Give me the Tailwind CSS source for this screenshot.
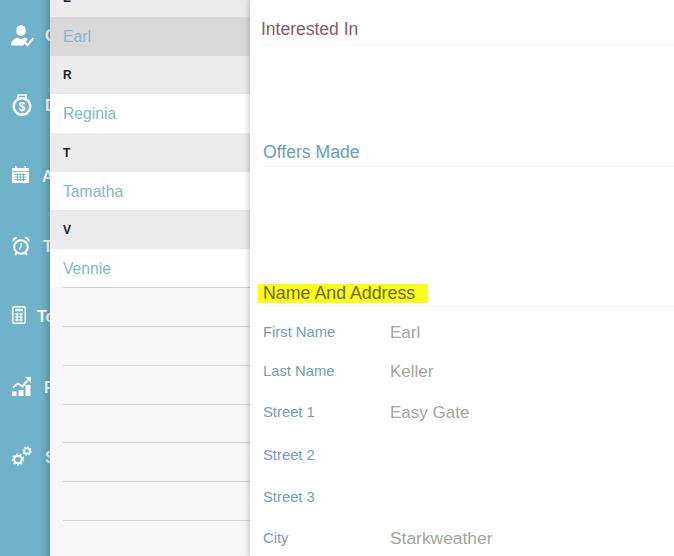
<!DOCTYPE html>
<html lang="en">
<head>
    <meta charset="UTF-8">
    <meta name="viewport" content="width=device-width, initial-scale=1.0">
    <title>Contacts</title>
    <script src="https://cdn.jsdelivr.net/npm/@tailwindcss/browser@4"></script>
</head>
<body class="bg-white font-['Liberation_Sans',Arial,sans-serif]">
    <div class="flex h-[556px] w-[674px] overflow-hidden">
        <!-- side menu, labels run under the list -->
        <nav class="w-[50px] shrink-0 overflow-hidden bg-[#6fb2c9] pt-[1px] text-white">
            <div class="flex h-[70.3px] items-center pl-[11px] font-bold text-[16px] whitespace-nowrap">
                <svg class="w-[24px] h-[22px] shrink-0" viewBox="0 0 24 22" fill="white"><ellipse cx="10" cy="5.500" rx="4.800" ry="5.500"/><path d="M0 20.500c0-4.500 2.500-6.500 6.500-8l3.500 2 3.500-2c1.500.5 2.500 1 3 2l-4.500 6z"/><path d="M13 18l1.500-1.500 2 2.200 5-6.200 1.500 1.200-6.500 8z"/></svg>
                <span class="ml-[10px]">Customers</span>
            </div>
            <div class="flex h-[70.3px] items-center pl-[12px] font-bold text-[16px] whitespace-nowrap">
                <svg class="w-[20px] h-[22px] shrink-0 mb-[3px]" viewBox="0 0 20 22" fill="none" stroke="white"><path d="M6 1h8v3h-8z" stroke-width="1.500"/><circle cx="10" cy="12.500" r="8.300" stroke-width="2.500"/><text x="10" y="17" text-anchor="middle" font-size="12" font-family="Liberation Sans" fill="white" stroke="none">$</text></svg>
                <span class="ml-[13px]">Deals</span>
            </div>
            <div class="flex h-[70.3px] items-center pl-[12px] font-bold text-[16px] whitespace-nowrap">
                <svg class="w-[17px] h-[17px] shrink-0 mb-[5px]" viewBox="0 0 17 17" fill="white"><path d="M0 2h3V0h1.500v2h8V0H14v2h3v15H0z"/><path d="M0 5.500h17" stroke="#6fb2c9" fill="none" stroke-width=".8"/><path d="M2.500 8.500h12M2.500 11h12M2.500 13.500h12M5.500 7.500v7.500M8.500 7.500v7.500M11.500 7.500v7.500" stroke="#6fb2c9" fill="none" stroke-width=".9"/></svg>
                <span class="ml-[13px]">Appointments</span>
            </div>
            <div class="flex h-[70.3px] items-center pl-[12px] font-bold text-[16px] whitespace-nowrap">
                <svg class="w-[18px] h-[20px] shrink-0 mb-[3px]" viewBox="0 0 18 20" fill="none" stroke="white"><circle cx="9" cy="11" r="6.800" stroke-width="2"/><path d="M9 7v4l-2 2.500" stroke-width="1.200"/><path d="M1 5.500C.5 2.500 2.500 1 5 1.500zM17 5.500c.5-3-1.500-4.500-4-4z" fill="white" stroke-width="1"/><path d="M4.500 17l-1.500 2M13.500 17l1.500 2" stroke-width="2"/></svg>
                <span class="ml-[13px]">Tasks</span>
            </div>
            <div class="flex h-[70.3px] items-center pl-[12px] font-bold text-[16px] whitespace-nowrap">
                <svg class="w-[14px] h-[18px] shrink-0 mb-[4px]" viewBox="0 0 14 18" fill="none" stroke="white"><rect x=".75" y=".75" width="12.500" height="16.500" rx="1.500" stroke-width="1.500"/><path d="M3 4h8" stroke-width="2.500"/><path d="M3 8h8M3 11h8M3 14h8M5 7v8.500M9 7v8.500" stroke-width="1.200"/></svg>
                <span class="ml-[11px]">Tools</span>
            </div>
            <div class="flex h-[70.3px] items-center pl-[12px] font-bold text-[16px] whitespace-nowrap">
                <svg class="w-[19px] h-[20px] shrink-0 mb-[4px]" viewBox="0 0 19 20" fill="white"><path d="M0 15.500h4.500V20H0zM6.500 14h5v6h-5zM13.500 9h5v11h-5z"/><path d="M1 11.500l5-4 4.500 3 5-6" fill="none" stroke="white" stroke-width="2"/><path d="M13 1h6v6z"/></svg>
                <span class="ml-[13px]">Reports</span>
            </div>
            <div class="flex h-[70.3px] items-center pl-[12px] font-bold text-[16px] whitespace-nowrap">
                <svg class="w-[20px] h-[20px] shrink-0 mb-[4px]" viewBox="0 0 20 20" fill="none" stroke="white"><circle cx="6" cy="13.500" r="3.800" stroke-width="2"/><circle cx="6" cy="13.500" r="5.400" stroke-width="1.600" stroke-dasharray="1.800 2"/><circle cx="15" cy="5" r="2.800" stroke-width="1.500"/><circle cx="15" cy="5" r="4" stroke-width="1.300" stroke-dasharray="1.500 1.600"/></svg>
                <span class="ml-[13px]">Settings</span>
            </div>
        </nav>

        <!-- contact list -->
        <aside class="relative z-10 w-[200px] shrink-0 -mt-[22px] h-[600px] bg-[#f7f7f7] shadow-[-3px_0_7px_rgba(0,0,0,0.22)]">
            <div class="flex h-[39px] items-center bg-[#ebebeb] pl-[13px] pt-[1px] text-[12px] font-bold text-[#222]">E</div>
            <div class="flex h-[38.5px] items-center bg-[#d9d9d9] pl-[13px] pt-[1px] text-[15.700px] text-[#7fb7cc]">Earl</div>
            <div class="flex h-[38.7px] items-center bg-[#ebebeb] pl-[13px] pt-[1px] text-[12px] font-bold text-[#222]">R</div>
            <div class="flex h-[38.7px] items-center bg-white pl-[13px] pt-[1px] text-[15.700px] text-[#7fb7cc]">Reginia</div>
            <div class="flex h-[38.7px] items-center bg-[#ebebeb] pl-[13px] pt-[1px] text-[12px] font-bold text-[#222]">T</div>
            <div class="flex h-[38.7px] items-center bg-white pl-[13px] pt-[1px] text-[15.700px] text-[#7fb7cc]">Tamatha</div>
            <div class="flex h-[38.7px] items-center bg-[#ebebeb] pl-[13px] pt-[1px] text-[12px] font-bold text-[#222]">V</div>
            <div class="flex h-[38.5px] items-center bg-white pl-[13px] pt-[1px] text-[15.700px] text-[#7fb7cc]">Vennie</div>
            <div class="ml-[13px] h-[38.7px] border-t border-[#cfcfcf]"></div>
            <div class="ml-[13px] h-[38.7px] border-t border-[#cfcfcf]"></div>
            <div class="ml-[13px] h-[38.7px] border-t border-[#d8d8d8]"></div>
            <div class="ml-[13px] h-[38.7px] border-t border-[#cfcfcf]"></div>
            <div class="ml-[13px] h-[38.7px] border-t border-[#cfcfcf]"></div>
            <div class="ml-[13px] h-[38.7px] border-t border-[#cfcfcf]"></div>
            <div class="ml-[13px] h-[38.7px] border-t border-[#d8d8d8]"></div>
        </aside>

        <!-- detail panel -->
        <main class="relative z-20 flex-1 min-w-0 bg-white shadow-[-2px_0_5px_rgba(0,0,0,0.18)]">
            <section class="h-[122px] pt-[19px]">
                <h2 class="ml-[11px] h-[26px] border-b border-[#f5f5f5] text-[17.500px] leading-[21px] text-[#8a5a6c]">Interested In</h2>
            </section>
            <section class="h-[141px] pt-[20px]">
                <h2 class="ml-[13px] h-[25px] border-b border-[#f5f5f5] text-[17.600px] leading-[21px] text-[#6b9fb8]">Offers Made</h2>
            </section>
            <section>
                <h2 class="ml-[13px] h-[44px] border-b border-[#f5f5f5] pt-[21px] text-[17.800px] leading-[18px] text-[#6b6a10]"><span class="-ml-[5px] inline-block h-[19px] w-[170px] bg-[#fdfc1c] pl-[5px]">Name And Address</span></h2>
                <div class="ml-[13px] mt-[6px] flex h-[38px] items-center text-[14.800px] text-[#6f9fb8]"><span class="w-[127px]">First Name</span><span class="mt-[2px] text-[17px] text-[#a5a5a0]">Earl</span></div>
                <div class="ml-[13px] flex h-[40px] items-center text-[14.800px] text-[#6f9fb8]"><span class="w-[127px]">Last Name</span><span class="mt-[2px] text-[17px] text-[#a5a5a0]">Keller</span></div>
                <div class="ml-[13px] flex h-[42px] items-center text-[14.800px] text-[#6f9fb8]"><span class="w-[127px]">Street 1</span><span class="mt-[2px] text-[17px] text-[#a5a5a0]">Easy Gate</span></div>
                <div class="ml-[13px] flex h-[44px] items-center text-[14.800px] text-[#6f9fb8]"><span class="w-[127px]">Street 2</span></div>
                <div class="ml-[13px] flex h-[40px] items-center text-[14.800px] text-[#6f9fb8]"><span class="w-[127px]">Street 3</span></div>
                <div class="ml-[13px] flex h-[42px] items-center text-[14.800px] text-[#6f9fb8]"><span class="w-[127px]">City</span><span class="text-[17.400px] text-[#a5a5a0]">Starkweather</span></div>
            </section>
        </main>
    </div>
</body>
</html>
